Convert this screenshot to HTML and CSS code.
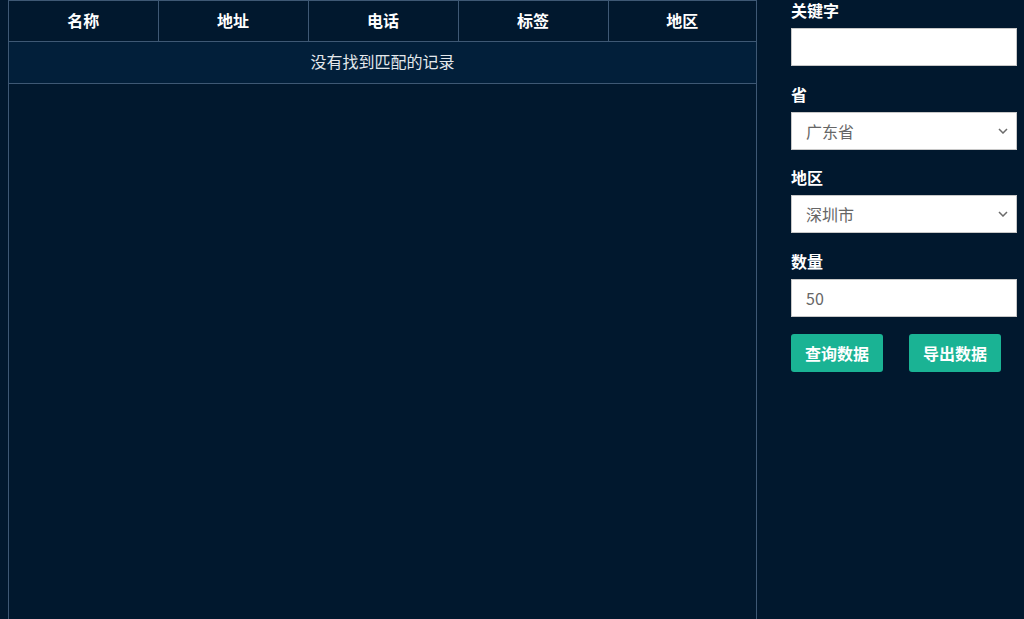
FILE: index.html
```html
<!DOCTYPE html>
<html>
<head>
    <meta charset="utf-8">
    <link rel="stylesheet" href="styles.css">
</head>
<body>
    <div class="page">
        <!-- result table -->
        <div class="table-panel">
            <table class="result-table">
                <colgroup>
                    <col class="col-first">
                    <col class="col-fixed">
                    <col class="col-fixed">
                    <col class="col-fixed">
                    <col>
                </colgroup>
                <thead>
                    <tr>
                        <th>名称</th>
                        <th>地址</th>
                        <th>电话</th>
                        <th>标签</th>
                        <th>地区</th>
                    </tr>
                </thead>
                <tbody>
                    <tr class="no-records">
                        <td colspan="5">没有找到匹配的记录</td>
                    </tr>
                </tbody>
            </table>
        </div>

        <!-- search form -->
        <div class="search-panel">
            <div class="form-group">
                <label for="keyword">关键字</label>
                <input id="keyword" class="form-control" type="text">
            </div>
            <div class="form-group">
                <label for="province">省</label>
                <div class="select-wrap">
                    <select id="province" class="form-control">
                        <option>广东省</option>
                    </select>
                    <svg class="chevron" width="10" height="6" viewBox="0 0 10 6"><path d="M1 1 L5 5 L9 1" fill="none" stroke="#6b6b6b" stroke-width="1.5"/></svg>
                </div>
            </div>
            <div class="form-group">
                <label for="city">地区</label>
                <div class="select-wrap">
                    <select id="city" class="form-control">
                        <option>深圳市</option>
                    </select>
                    <svg class="chevron" width="10" height="6" viewBox="0 0 10 6"><path d="M1 1 L5 5 L9 1" fill="none" stroke="#6b6b6b" stroke-width="1.5"/></svg>
                </div>
            </div>
            <div class="form-group">
                <label for="count">数量</label>
                <input id="count" class="form-control" type="text" value="50">
            </div>
            <div class="buttons">
                <button class="btn">查询数据</button>
                <button class="btn">导出数据</button>
            </div>
        </div>
    </div>
</body>
</html>
```

FILE: styles.css
```css
body {
    margin: 0;
    background-color: #01182e;
    font-family: "Noto Sans CJK SC", "Liberation Sans", sans-serif;
    color: #fff;
    overflow: hidden;
}

.page {
    display: flex;
    align-items: flex-start;
    padding-left: 8px;
    height: 619px;
}

.table-panel {
    width: 747px;
    height: 618px;
    border-top: 1px solid #3e5874;
    border-left: 1px solid #3e5874;
    border-right: 1px solid #3e5874;
}

.result-table {
    width: 100%;
    border-collapse: collapse;
    table-layout: fixed;
    font-size: 16px;
}

.col-first {
    width: 149px;
}

.col-fixed {
    width: 150px;
}

.result-table th {
    height: 37px;
    padding: 0 0 3px;
    border-right: 1px solid #3e5874;
    border-bottom: 1px solid #3e5874;
    font-weight: bold;
    text-align: center;
    background-color: #01182e;
}

.result-table th:last-child {
    border-right: none;
}

.no-records td {
    height: 37px;
    padding: 0 0 4px;
    text-align: center;
    color: #e4e8ec;
    background-color: #021f3a;
    border-bottom: 1px solid #3e5874;
}

.search-panel {
    width: 226px;
    margin-left: 34px;
}

.form-group {
    margin-bottom: 17.5px;
}

.form-group label {
    display: block;
    height: 20px;
    line-height: 20px;
    margin-bottom: 8px;
    font-size: 16px;
    font-weight: bold;
}

.form-control {
    display: block;
    box-sizing: border-box;
    width: 100%;
    height: 38px;
    margin: 0;
    padding: 0 14px;
    border: 1px solid #c8c8c8;
    border-radius: 0;
    background-color: #fff;
    color: #666;
    font-family: "Noto Sans CJK SC", "Liberation Sans", sans-serif;
    font-size: 16px;
    outline: none;
}

.select-wrap {
    position: relative;
}

select.form-control {
    appearance: none;
    -webkit-appearance: none;
}

.chevron {
    position: absolute;
    right: 9px;
    top: 16px;
    pointer-events: none;
}

.buttons {
    display: flex;
    gap: 26px;
    margin-top: -0.5px;
}

.btn {
    width: 92px;
    height: 38px;
    padding: 0;
    border: none;
    border-radius: 3px;
    background-color: #1ab394;
    color: #fff;
    font-family: "Noto Sans CJK SC", "Liberation Sans", sans-serif;
    font-size: 16px;
    font-weight: bold;
    cursor: pointer;
}
```
